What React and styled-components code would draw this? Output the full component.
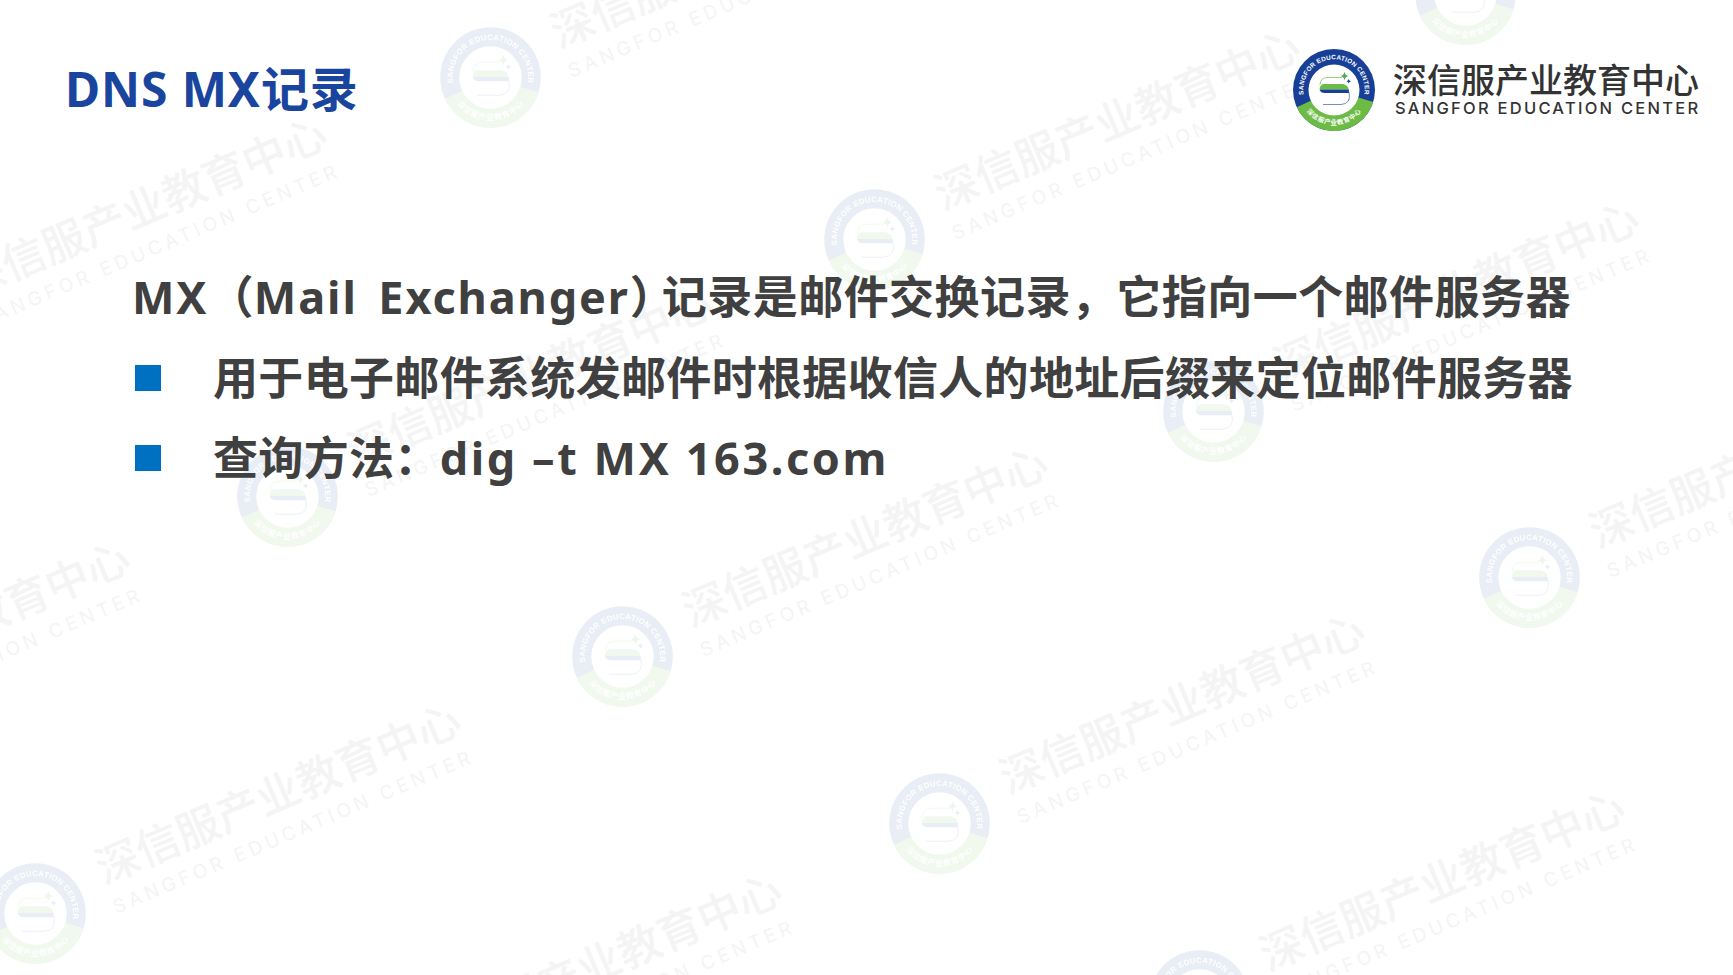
import { useId } from 'react'
import styled, { createGlobalStyle } from 'styled-components'

const GlobalStyle = createGlobalStyle`
  html, body {
    margin: 0;
    padding: 0;
    background: #ffffff;
  }
`

// badge centres, read off the slide background
const marks = [
  [490, 77], [874, 239], [1213, 411], [287, 496], [1529, 577],
  [622, 656], [939, 823], [35, 913], [1465, -6], [1199, 1000],
  [-99, 327], [-296, 751], [356, 1083],
]

function Badge({ size }) {
  const id = useId()
  return (
    <svg width={size} height={size} viewBox="0 0 84 84">
      <defs>
        <path id={id + 'top'} d="M12.8 51.5 A30.7 30.7 0 1 1 71.2 51.5" />
        <path id={id + 'bottom'} d="M11 58 A35 35 0 0 0 73 58" />
      </defs>
      <circle cx="42" cy="42" r="41" fill="#173f97" />
      <path d="M42 42 L4.8 59.3 A41 41 0 0 0 81.2 54 Z" fill="#6cbb45" />
      <circle cx="42" cy="42" r="25.5" fill="#ffffff" />
      <text fontFamily="Liberation Sans, sans-serif" fontSize="6.4" fontWeight="700" letterSpacing="0.25" fill="#ffffff" textAnchor="middle">
        <textPath href={'#' + id + 'top'} startOffset="50%">SANGFOR EDUCATION CENTER</textPath>
      </text>
      <text fontFamily="Noto Sans CJK SC, sans-serif" fontSize="6.4" fontWeight="700" letterSpacing="0.6" fill="#ffffff" textAnchor="middle">
        <textPath href={'#' + id + 'bottom'} startOffset="50%">深信服产业教育中心</textPath>
      </text>
      <path d="M50 29.5 H36 Q28.2 29.5 28 37" fill="none" stroke="#6cbb45" strokeWidth="0.7" />
      <path d="M31 36 H51 Q56 37 56.8 41.5 H27.6 Q27.6 37.5 31 36 Z" fill="#6cbb45" />
      <path d="M27.6 41.5 H56.8 L57 45 H33 Q28.5 45 27.6 41.5 Z" fill="#173f97" />
      <path d="M57 44 Q59.5 56 49 56.5 H31" fill="none" stroke="#173f97" strokeWidth="0.6" />
      <path d="M52.5 23.5 Q53 27.5 56.5 28 Q53 28.5 52.5 32.5 Q52 28.5 48.5 28 Q52 27.5 52.5 23.5 Z" fill="#4fa85a" />
      <path d="M56.7 31 Q57 33 59 33.2 Q57 33.5 56.7 35.5 Q56.4 33.5 54.4 33.2 Q56.4 33 56.7 31 Z" fill="#173f97" />
    </svg>
  )
}

export default function App() {
  return (
    <Slide lang="zh-CN">
      <GlobalStyle />
      <Watermarks>
        {marks.map(([x, y]) => (
          <Mark key={`${x}-${y}`} style={{ left: x, top: y }}>
            <MarkBadge>
              <Badge size={103} />
            </MarkBadge>
            <MarkText>
              <MarkCn>深信服产业教育中心</MarkCn>
              <MarkEn>SANGFOR EDUCATION CENTER</MarkEn>
            </MarkText>
          </Mark>
        ))}
      </Watermarks>

      <Header>
        <Title>DNS MX记录</Title>
        <Logo>
          <Badge size={84} />
          <LogoText>
            <LogoCn>深信服产业教育中心</LogoCn>
            <LogoEn>SANGFOR EDUCATION CENTER</LogoEn>
          </LogoText>
        </Logo>
      </Header>

      <Content>
        <Lead>
          <Latin $track={1.9} $word={7}>MX</Latin>（<Latin $track={1.9} $word={7}>Mail Exchanger</Latin><Paren>）</Paren>记录是邮件交换记录，它指向一个邮件服务器
        </Lead>
        <Item>
          <Bullet />
          <span>用于电子邮件系统发邮件时根据收信人的地址后缀来定位邮件服务器</span>
        </Item>
        <Item>
          <Bullet />
          <span>
            查询方法：<Latin $track={2.6}>dig –t MX 163.com</Latin>
          </span>
        </Item>
      </Content>
    </Slide>
  )
}

const Slide = styled.div`
  position: relative;
  width: 1733px;
  height: 975px;
  overflow: hidden;
  background: #ffffff;
`

const Watermarks = styled.div`
  position: absolute;
  inset: 0;
`

const Mark = styled.div`
  position: absolute;
  width: 0;
  height: 0;
`

const MarkBadge = styled.div`
  position: absolute;
  left: -51px;
  top: -51px;
  opacity: 0.09;
  line-height: 0;
  filter: blur(0.5px);
`

const MarkText = styled.div`
  position: absolute;
  left: 62px;
  top: -45px;
  width: 420px;
  transform: translateY(-22px) rotate(-23deg);
  transform-origin: 0 22px;
  color: #f4f4f4;
  white-space: nowrap;
`

const MarkCn = styled.div`
  font-family: 'Noto Sans CJK SC', sans-serif;
  font-size: 43.5px;
  font-weight: 500;
  line-height: 44px;
`

const MarkEn = styled.div`
  margin-top: 12px;
  font-family: 'Inter', sans-serif;
  font-size: 19px;
  line-height: 20px;
  letter-spacing: 4.25px;
`

const Header = styled.header`
  position: relative;
  display: flex;
  align-items: center;
  justify-content: space-between;
  height: 82px;
  padding: 49px 34px 0 65px;
`

const Title = styled.h1`
  margin: 0;
  padding-bottom: 2px;
  font-family: 'Noto Sans', 'Noto Sans CJK SC', sans-serif;
  font-size: 48px;
  font-weight: 700;
  line-height: 80px;
  letter-spacing: 0.9px;
  color: #1a459e;
`

const Logo = styled.div`
  display: flex;
  align-items: center;
  gap: 17px;
`

const LogoText = styled.div`
  display: flex;
  flex-direction: column;
  width: 306px;
  padding-bottom: 3px;
  white-space: nowrap;
  color: #333333;
`

const LogoCn = styled.div`
  font-family: 'Noto Sans CJK SC', sans-serif;
  font-size: 34px;
  font-weight: 500;
  line-height: 39px;
`

const LogoEn = styled.div`
  padding-left: 2px;
  font-family: 'Inter', sans-serif;
  font-size: 16.5px;
  font-weight: 500;
  line-height: 20px;
  letter-spacing: 2.25px;
`

const Content = styled.main`
  position: relative;
  display: flex;
  flex-direction: column;
  padding: 126px 0 0 132px;
  font-family: 'Noto Sans', 'Noto Sans CJK SC', sans-serif;
  font-size: 45px;
  font-weight: 700;
  line-height: 80.5px;
  letter-spacing: 0.33px;
  color: #404040;
  white-space: nowrap;
`

const Lead = styled.div`
  height: 80.5px;
  letter-spacing: 0.45px;
`

const Latin = styled.span`
  letter-spacing: ${(p) => p.$track}px;
  word-spacing: ${(p) => p.$word || 0}px;
`

const Paren = styled.span`
  letter-spacing: -13px;
`

const Item = styled.div`
  display: flex;
  align-items: center;
  gap: 52px;
  height: 80.5px;
  padding-left: 3px;
`

const Bullet = styled.i`
  display: block;
  width: 26px;
  height: 26px;
  background: #0070c0;
`
